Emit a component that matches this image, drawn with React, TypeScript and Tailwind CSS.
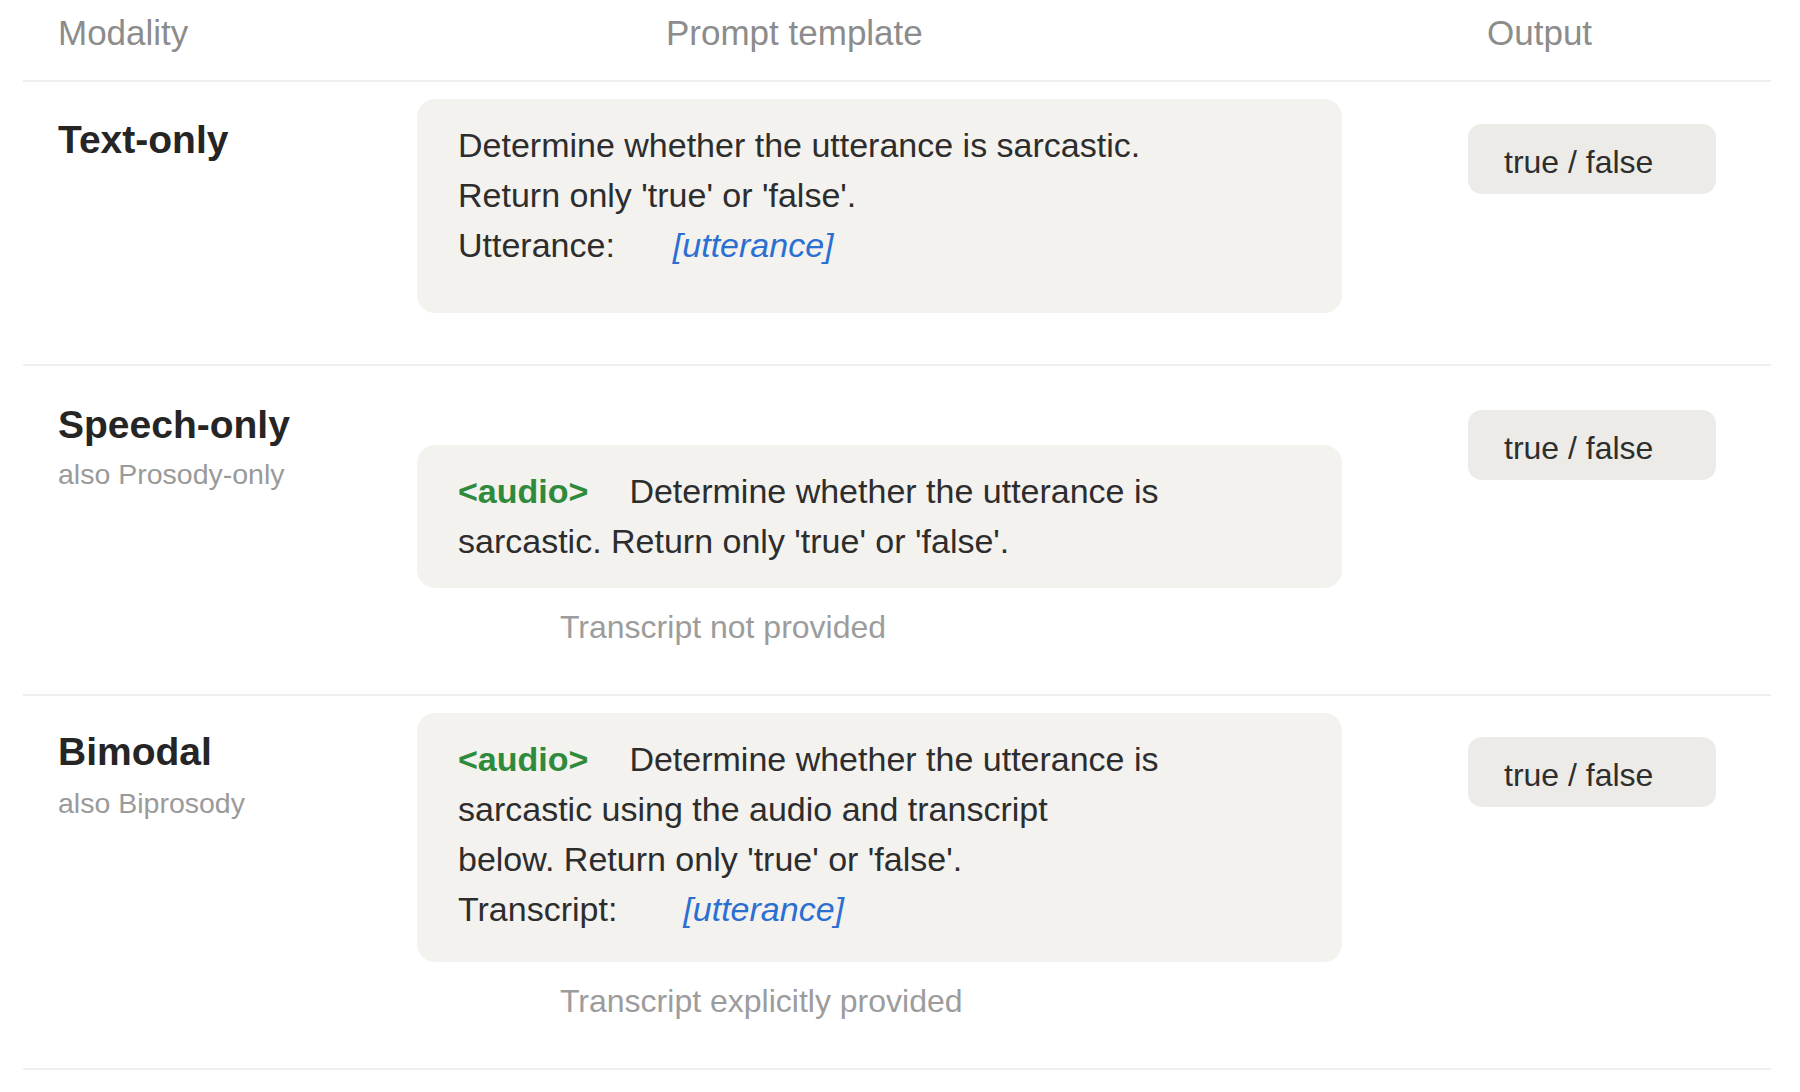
import type { ReactNode } from 'react';

const Audio = () => <span className="font-bold text-[#2f8a3c] mr-[41px]">&lt;audio&gt;</span>;

const Slot = () => <span className="italic text-[#2b6fd1]">[utterance]</span>;

const Pill = ({ className }: { className: string }) => (
  <div className={`ml-[126px] w-[248px] h-[70px] rounded-[14px] bg-[#ecebe7] flex items-center pl-[36px] pt-[6px] text-[32px] text-[#2e2e2e] ${className}`}>
    true / false
  </div>
);

interface RowProps {
  label: string;
  sub?: string;
  labelTop: string;
  subTop?: string;
  box: ReactNode;
  boxClass: string;
  caption?: string;
  pillTop: string;
}

const Row = ({ label, sub, labelTop, subTop, box, boxClass, caption, pillTop }: RowProps) => (
  <div className="grid grid-cols-[394px_925px_1fr] border-b-2 border-[#f0efec]">
    {/* Modality */}
    <div className={`pl-[35px] ${labelTop}`}>
      <div className="text-[39px] leading-[46px] font-bold text-[#252525]">{label}</div>
      {sub && <div className={`text-[28.5px] leading-[36px] text-[#9a9a9a] ${subTop}`}>{sub}</div>}
    </div>

    {/* Prompt template */}
    <div>
      <div className={`rounded-[18px] bg-[#f3f2ef] pl-[41px] pt-[21px] text-[34px] leading-[50px] text-[#2d2d2d] ${boxClass}`}>
        {box}
      </div>
      {caption && (
        <div className="pl-[143px] mt-[19px] mb-[47px] text-[32px] leading-[40px] text-[#9c9c9c]">{caption}</div>
      )}
    </div>

    {/* Output */}
    <div>
      <Pill className={pillTop} />
    </div>
  </div>
);

export default function App() {
  return (
    <div className="min-h-screen bg-white font-['Liberation_Sans',Arial,sans-serif]">
      <div className="ml-[23px] w-[1748px]">
        {/* Header */}
        <div className="grid grid-cols-[394px_925px_1fr] h-[82px] border-b-2 border-[#f0efec] text-[35px] leading-[40px] text-[#8c8c8c]">
          <div className="pl-[35px] pt-[13px]">Modality</div>
          <div className="pl-[249px] pt-[13px]">Prompt template</div>
          <div className="pl-[145px] pt-[13px]">Output</div>
        </div>

        <Row
          label="Text-only"
          labelTop="mt-[35px]"
          boxClass="mt-[17px] pb-[43px] mb-[51px]"
          pillTop="mt-[42px]"
          box={
            <>
              <div>Determine whether the utterance is sarcastic.</div>
              <div>Return only 'true' or 'false'.</div>
              <div>
                <span className="mr-[58px]">Utterance:</span>
                <Slot />
              </div>
            </>
          }
        />

        <Row
          label="Speech-only"
          sub="also Prosody-only"
          labelTop="mt-[36px]"
          subTop="mt-[8px]"
          boxClass="mt-[79px] pb-[22px]"
          caption="Transcript not provided"
          pillTop="mt-[44px]"
          box={
            <>
              <div>
                <Audio />
                Determine whether the utterance is
              </div>
              <div>sarcastic. Return only 'true' or 'false'.</div>
            </>
          }
        />

        <Row
          label="Bimodal"
          sub="also Biprosody"
          labelTop="mt-[33px]"
          subTop="mt-[10px]"
          boxClass="mt-[17px] pb-[28px]"
          caption="Transcript explicitly provided"
          pillTop="mt-[41px]"
          box={
            <>
              <div>
                <Audio />
                Determine whether the utterance is
              </div>
              <div>sarcastic using the audio and transcript</div>
              <div>below. Return only 'true' or 'false'.</div>
              <div>
                <span className="mr-[66px]">Transcript:</span>
                <Slot />
              </div>
            </>
          }
        />
      </div>
    </div>
  );
}
